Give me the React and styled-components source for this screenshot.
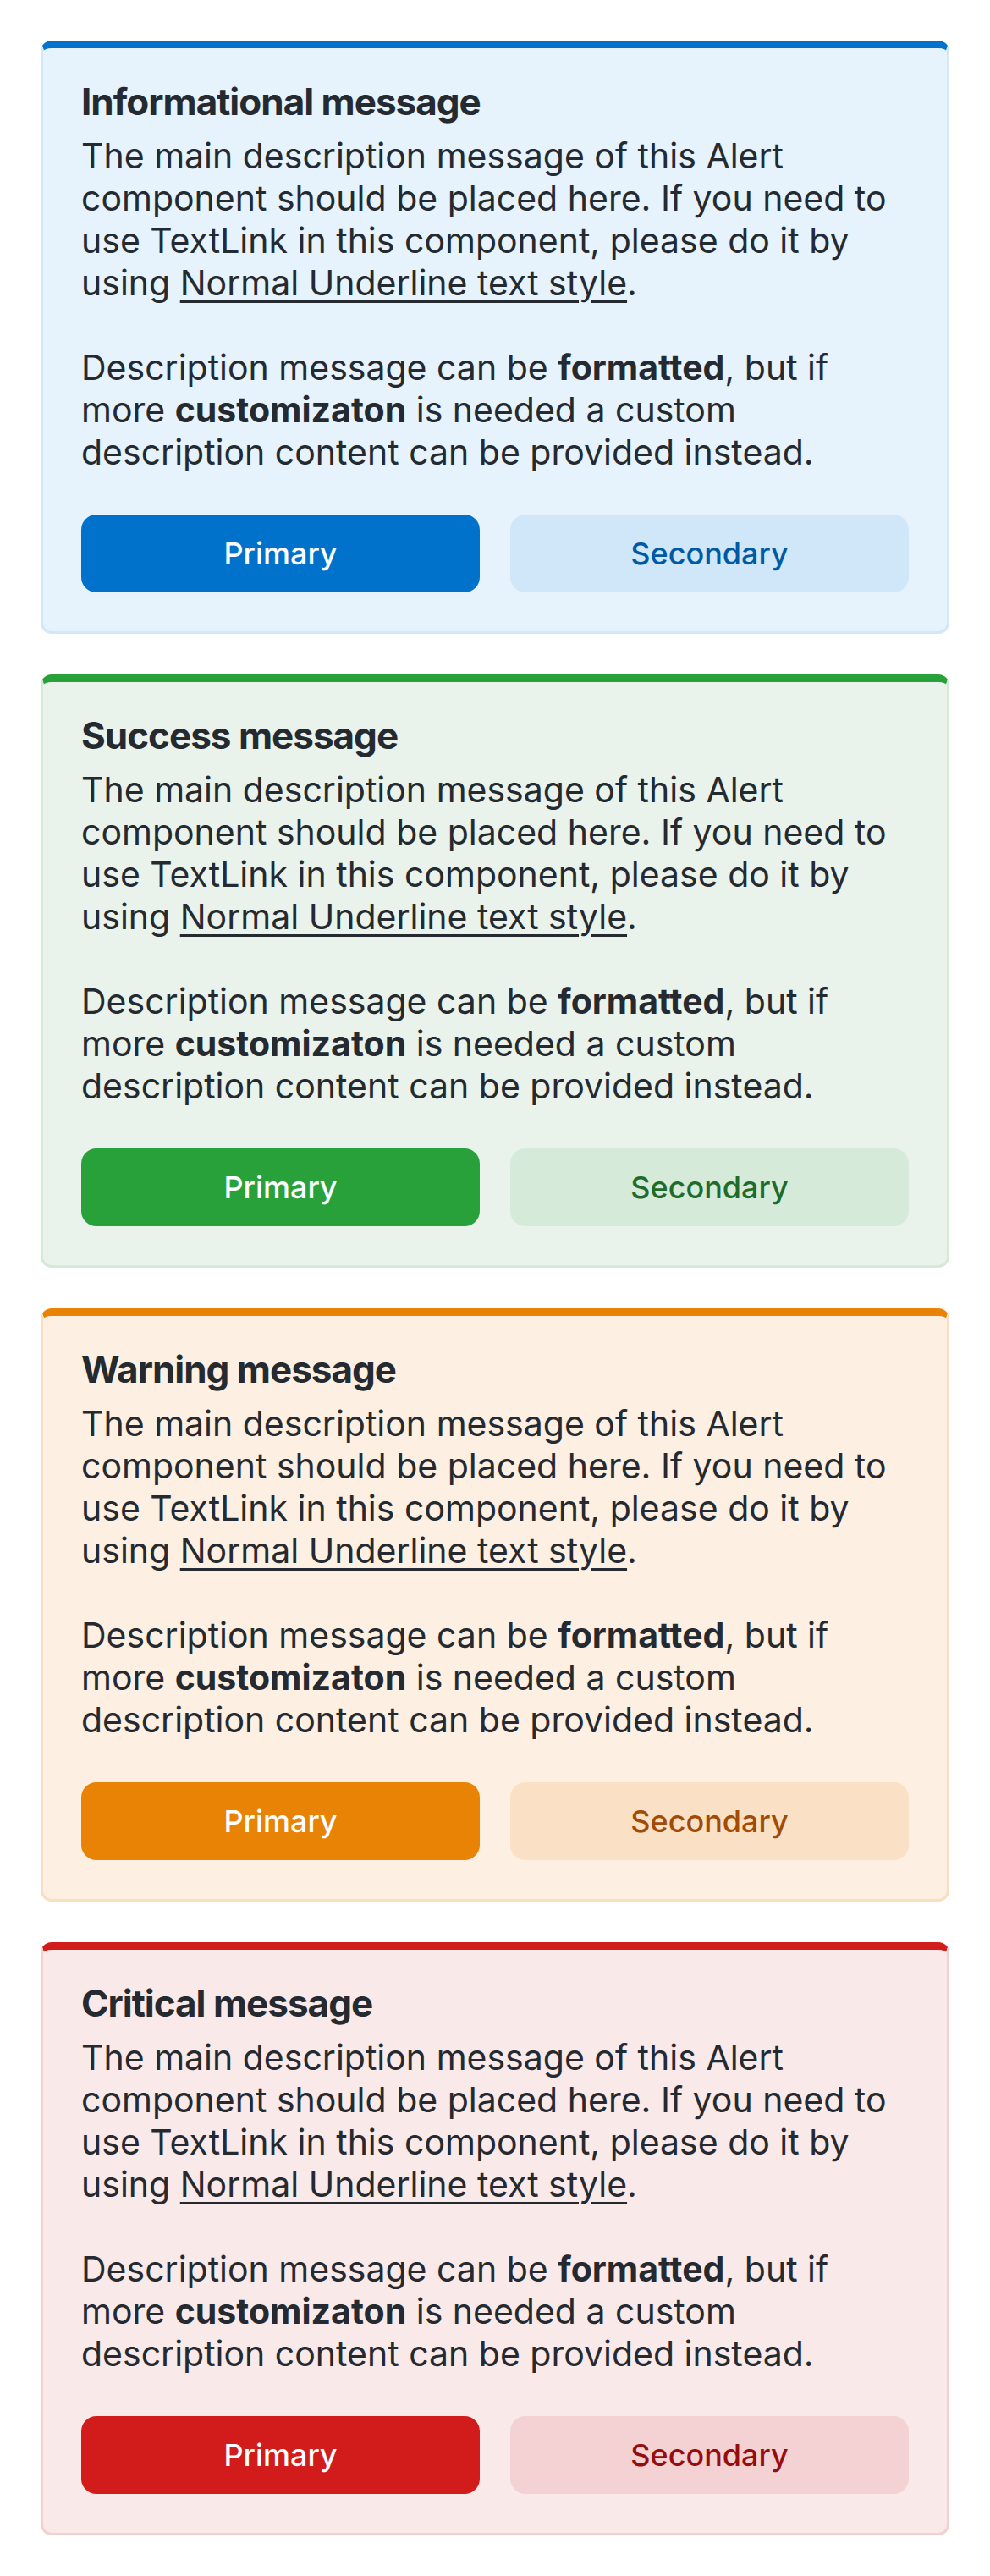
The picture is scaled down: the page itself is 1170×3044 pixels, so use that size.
import React from 'react';
import styled, { createGlobalStyle } from 'styled-components';

const GlobalStyle = createGlobalStyle`
  html, body {
    margin: 0;
    padding: 0;
    background: #ffffff;
  }
  body {
    font-family: Inter, "Noto Sans", sans-serif;
    color: #252a31;
    -webkit-font-smoothing: antialiased;
  }
`;

const palette = {
  info: {
    accent: '#0172cb',
    bg: '#e6f3fc',
    border: '#d2e7f8',
    soft: '#d0e7fa',
    softText: '#005aa3'
  },
  success: {
    accent: '#28a13a',
    bg: '#eaf3eb',
    border: '#d5e9d8',
    soft: '#d6eada',
    softText: '#1f6b2a'
  },
  warning: {
    accent: '#e98305',
    bg: '#fdefe2',
    border: '#f9dfc0',
    soft: '#fae1c5',
    softText: '#a24b06'
  },
  critical: {
    accent: '#d21c1c',
    bg: '#fae9e9',
    border: '#f3d0d0',
    soft: '#f4d1d2',
    softText: '#970c0c'
  }
};

const Page = styled.div`
  display: flex;
  flex-direction: column;
  gap: 48px;
  padding: 48px;
`;

const AlertBox = styled.section`
  background: ${p => palette[p.$type].bg};
  border: 3px solid ${p => palette[p.$type].border};
  border-top: 9px solid ${p => palette[p.$type].accent};
  border-radius: 13px;
  padding: 38px 45px 46px 45px;
`;

const Title = styled.h2`
  margin: 0 0 14px;
  font-size: 44px;
  line-height: 50px;
  letter-spacing: -1px;
  font-weight: 700;
  color: #252a31;
`;

const Description = styled.div`
  font-size: 41px;
  line-height: 50px;
  font-weight: 400;
  color: #252a31;

  p {
    margin: 0;
  }
  p + p {
    margin-top: 50px;
  }
  strong {
    font-weight: 700;
  }
`;

const TextLink = styled.a`
  color: inherit;
  text-decoration: underline;
  text-decoration-thickness: 3px;
  text-underline-offset: 6px;
  cursor: pointer;
`;

const Actions = styled.div`
  display: grid;
  grid-template-columns: 1fr 1fr;
  gap: 36px;
  margin-top: 49px;
`;

const Button = styled.button`
  height: 92px;
  border: 0;
  border-radius: 18px;
  font-family: Inter, "Noto Sans", sans-serif;
  font-size: 36px;
  font-weight: 500;
  background: ${p => p.$primary ? palette[p.$type].accent : palette[p.$type].soft};
  color: ${p => p.$primary ? '#ffffff' : palette[p.$type].softText};
  cursor: pointer;
`;

const alerts = [
  { type: 'info', title: 'Informational message' },
  { type: 'success', title: 'Success message' },
  { type: 'warning', title: 'Warning message' },
  { type: 'critical', title: 'Critical message' }
];

const Alert = ({ type, title }) => (
  <AlertBox $type={type}>
    <Title>{title}</Title>
    <Description>
      <p>
        The main description message of this Alert component should be placed here. If you need to
        use TextLink in this component, please do it by using <TextLink>Normal Underline text style</TextLink>.
      </p>
      <p>
        Description message can be <strong>formatted</strong>, but if more <strong>customizaton</strong> is
        needed a custom description content can be provided instead.
      </p>
    </Description>
    <Actions>
      <Button $type={type} $primary>Primary</Button>
      <Button $type={type}>Secondary</Button>
    </Actions>
  </AlertBox>
);

export default function App() {
  return (
    <>
      <GlobalStyle />
      <Page>
        {alerts.map(a => (
          <Alert key={a.type} type={a.type} title={a.title} />
        ))}
      </Page>
    </>
  );
}
